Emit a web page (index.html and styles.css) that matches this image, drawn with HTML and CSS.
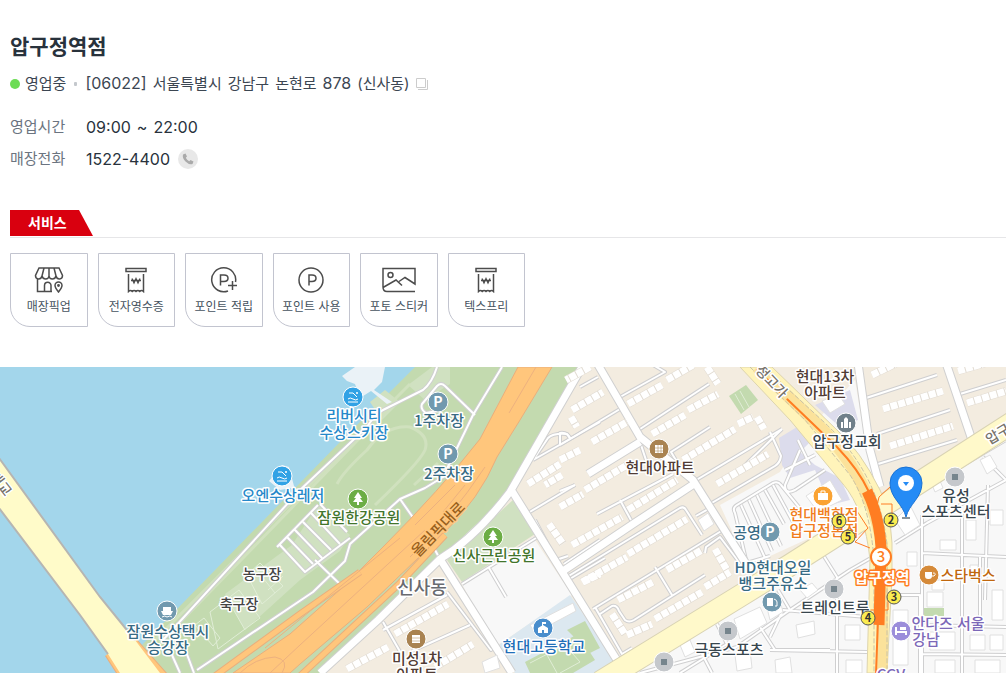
FILE: index.html
```html
<!DOCTYPE html>
<html lang="ko">
<head>
<meta charset="utf-8">
<meta name="viewport" content="width=device-width, initial-scale=1">
<title>압구정역점</title>
<link rel="stylesheet" href="styles.css">
</head>
<body>
<main class="store">
  <header class="summary">
    <h1 class="name">압구정역점</h1>
    <div class="status-row">
      <span class="status"><i class="dot"></i>영업중</span>
      <span class="sep"></span>
      <span class="address"><span class="num">[06022]</span> <span>서울특별시</span> <span>강남구</span> <span>논현로</span> <span class="num">878</span> <span>(신사동)</span></span>
      <button class="copy" type="button" aria-label="주소 복사">
        <svg width="14" height="14" viewBox="0 0 14 14"><path class="copy-line" d="M1.5 1.5h9v9h-9zM12.500 3v9.500H3"/></svg>
      </button>
    </div>
    <dl class="facts">
      <dt>영업시간</dt><dd class="hours"><span>09:00</span> <span>~</span> <span>22:00</span></dd>
      <dt>매장전화</dt><dd>1522-4400
        <a class="call" href="tel:1522-4400" aria-label="전화 걸기"><svg width="12" height="12" viewBox="0 0 12 12"><path d="M1 1.500 3.500.5 5 3.500 3.800 4.800Q4.800 7 7.200 8.200L8.500 7l3 1.500-1 2.500Q7 12 3.500 8.500 0 5 1 1.500z"/></svg></a>
      </dd>
    </dl>
  </header>

  <section class="services">
    <div class="tab-line"><h2 class="tab">서비스</h2></div>
    <ul class="cards">
      <li class="card">
        <svg class="icon" width="30" height="26" viewBox="0 0 30 26"><path d="M5 1h20l3.500 7.500c0 4.500-5.500 4.500-6.500.5-1 4-6.500 4-7 0-.5 4-6 4-7 0-1 4-6.500 4-6.500-.5zM10 1 8 9M15 1v8M20 1l2 8M3.500 12v12.500H18M10.500 24v-5.500a3 3 0 0 1 6.500 0V24M24.500 25c-2-2.500-3.500-4.500-3.500-6.500a3.500 3.500 0 0 1 7 0c0 2-1.500 4-3.500 6.500z"/><circle cx="24.500" cy="18.500" r=".7"/></svg>
        <span>매장픽업</span></li>
      <li class="card">
        <svg class="icon" width="22" height="26" viewBox="0 0 22 26"><path d="M1 1.500h20v3H1zM3.500 7v17.500q2-2 3.750 0 1.900-2 3.750 0 1.900-2 3.750 0 1.900-2 3.750 0V7"/><path class="won" d="m7 11.500 2 4.500 2-4.500 2 4.500 2-4.500M6 13.500h10"/></svg>
        <span>전자영수증</span></li>
      <li class="card">
        <svg class="icon" width="28" height="26" viewBox="0 0 28 26"><path d="M25.500 15A12 12 0 1 0 18 24M10.500 18.500V8H14q4 0 4 3.200t-4 3.300h-3.500M22.500 14v9M18 18.500h9"/></svg>
        <span>포인트 적립</span></li>
      <li class="card">
        <svg class="icon" width="26" height="26" viewBox="0 0 26 26"><circle cx="13" cy="13" r="12"/><path d="M11 18.500V8h3q4 0 4 3.200t-4 3.300h-3"/></svg>
        <span>포인트 사용</span></li>
      <li class="card">
        <svg class="icon" width="34" height="26" viewBox="0 0 34 26"><path d="M33 24.500H5Q1 24.500 1 20V1.500h32V17L23 10.500l-6 4M1 20.500 14 13l6 5.500"/><circle cx="8.500" cy="8" r="2.500"/></svg>
        <span>포토 스티커</span></li>
      <li class="card">
        <svg class="icon" width="22" height="26" viewBox="0 0 22 26"><path d="M1 1.500h20v3H1zM3.500 7v17.500q2-2 3.750 0 1.900-2 3.750 0 1.900-2 3.750 0 1.900-2 3.750 0V7"/><path class="won" d="m7 11.500 2 4.500 2-4.500 2 4.500 2-4.500M6 13.500h10"/></svg>
        <span>텍스프리</span></li>
    </ul>
  </section>

  <section class="map" aria-label="지도">
    <svg class="map-art" viewBox="0 367 1006 306" preserveAspectRatio="xMidYMid slice">
      <defs>
        <g id="lanes">
          <path d="M163 640 300 490 367 427Q375 414 383 410L423 390Q432 383 437 367M197 670 313 592 345 561 350 544 400 499 425 488 443 477 473 415 502 367M475 415 445 386Q441 382 437 386L422 404Q420 409 426 413L437 411M180 673 172 655M194 673 185 649M315 560 345 589M400 499 414 519M435 550 440 559"/>
          <path d="M277 547 318 505M279 544 305 572 350 538M287 537 313 564M295 530 322 558M303 522 331 550M311 513 340 544M320 504 347 532"/>
          <path d="M580 387 598 377M560 445 560 433Q568 432 570 439M560 445 620 409M620 397 665 372 648 362M640 429 709 384M680 467 671 452 710 427M560 491 575 485M597 514 673 474M620 500 632 522M693 482 782 429M770 432 781 456Q780 463 775 466L710 504M567 577 680 508Q684 506 686 510L702 535M593 609 723 530M655 567 672 595M600 614 612 606Q617 605 619 611L625 620Q629 623 634 620L705 575M595 607 622 654 632 648M705 553 706 547 720 537 745 570M696 516 712 507M640 442 646 460"/>
          <path d="M533 460 548 438Q553 433 567 434L571 439M535 520 556 560 568 556M564 564 600 540M568 580 605 558M533 460 600 422M528 513 575 485M489 568 506 597M462 584 536 538M447 592 491 650 495 647M383 630 447 595M383 622 402 655M412 651 470 625"/>
          <path d="M863 399 937 375M877 434 950 410M878 464 957 440M960 394 1006 380M740 470 782 429"/>
          <path d="M960 467 1006 440M983 457 1006 480M922 515V673M895 543 927 523 1006 480M922 553 1006 557M962 510V673M988 485 985 600M892 595H920V673M922 625 1006 627M922 654 1006 655M980 557V625M820 550 837 577V673M770 637 783 610 867 617M770 650 867 652M737 647 790 610 850 570 890 547M717 624 727 644M640 673 737 647M680 673 727 644M760 627 775 650H830M790 610 778 590M700 650 712 673"/>
          <path d="M747 564 735 513Q732 508 737 505L773 483Q778 481 781 485L803 512M741 505 765 558M749 500 772 551M757 495 781 546M765 490 784 524M773 485 793 522M750 562 770 556M800 450 785 485Q785 495 795 490L825 470M798 440 810 465M785 470 815 455"/>
        </g>
        <g id="streets">
          <path d="M582 367 510 492Q475 538 440 559L378 620 320 673M440 559 512 673M512 491 620 665M597 363 640 437 693 480 727 534 750 570M563 571 633 524 697 482M588 474 640 442M858 363 870 450 880 487M946 363 972 440"/>
        </g>
        <g id="blocks">
          <path d="M572 410 603 392M571 417 577 427M592 442 627 422M628 404 662 385M667 380 693 365M707 367 718 384M652 434 685 415M688 410 718 394M683 460 735 429M738 424 753 417M757 417 764 429M717 484 768 454M585 490 632 462M628 510 677 480M572 545 622 517M628 554 687 519M582 582 627 557M667 570 702 550M715 549 727 570M705 587 730 572M618 600 653 582M655 619 702 592M612 614 625 634M627 635 652 624M560 460 580 450M560 507 583 494M528 484 560 464M549 524 563 544M395 634 448 604M347 669 388 647M435 667 473 644M583 582 600 574M872 375 905 359M883 409 943 391M890 446 953 426M967 403 1006 391M958 371 1006 357M590 367 566 380M562 475 545 485"/>
        </g>
      </defs>

      <rect class="land" x="0" y="367" width="1006" height="306"/>
      <path class="estate" d="M578 367H1006V425L790 560 740 590 607 673H320L440 560 510 492z"/>
      <path class="land" d="M533 537 572 595 495 647 462 584zM720 505 780 472 800 440 840 430 872 470 860 515 748 566zM822 415 855 380 865 440 880 487 865 465z"/>
      <path class="mall" d="M779 438 797 427 812 440 800 452 815 465 840 478 850 500 830 505 815 470 790 478 782 465zM815 405 850 390 858 420 840 427z"/>
      <path class="campus" d="M570 595 618 665 605 673H515L496 647z"/>
      <path class="water" d="M0 367H430L142 650 160 673H0z"/>
      <path class="park" d="M415 367H580L510 492 440 559 323 673H160L142 645 340 442z"/>
      <path class="park" d="M729 396 746 385 758 400 741 414z"/>
      <path class="lawn" d="M432 367H450V384L425 400 408 385zM370 402 385 390 400 402 382 420zM225 594 292 545 318 505 350 535 340 551 300 580 245 630z"/>
      <path class="grass-line" d="M150 645 410 384M160 643 390 407M337 484Q343 472 367 450 385 425 410 427 430 435 425 450 420 462 375 505M414 485 438 463"/>
      <path class="pitch" d="M195 625 213 646 220 638 204 618zM210 612 239 590 260 618 218 649zM247 575 260 563 283 586 262 604zM255 568 275 593M268 590 283 576M735 394 744 410M740 391 749 407M228 600 245 630"/>
      <path class="lawn" d="M513 500 535 534 462 582 447 560z"/>
      <path class="park" d="M525 662 578 634 595 660 573 673H530zM567 630 585 621 600 648 590 653zM920 608H944V616H920z"/>
      <path class="pitch" d="M530 663 565 645 580 662 560 673M547 655 557 673"/>
      <path class="dock" d="M342 376 355 367H385L382 382 374 390 392 402 387 404 371 391 360 398 355 384 347 381zM269 481 282 465 289 467 294 486 300 493 296 496 291 488 280 490z"/>

      <use class="lane-edge" href="#lanes"/><use class="lane-top" href="#lanes"/>
      <use class="street-edge" href="#streets"/><use class="street-top" href="#streets"/>
      <use class="block-edge" href="#blocks"/><use class="block-top" href="#blocks"/>

      <path class="building" d="M530 625 573 603 576 611 535 633zM482 662 497 655 500 668 485 673zM698 520 708 513 714 524 704 531zM734 619 760 607 767 623 740 639zM765 600 778 593 783 612 770 620zM735 655 750 650 752 668 737 671zM775 660 790 657 792 673H776zM796 625 814 621 815 634 798 638zM845 625H860V640H845zM846 660H862V673H846zM800 590 812 583 818 590 807 598zM893 610H908V665H893zM927 592H943V607H927zM932 580H944V590H932zM940 540H956V550H940zM970 565H978V580H970zM992 590H1003V620H992zM970 635H985V650H970zM990 635H1003V650H990zM930 632H955V650H930zM935 660H955V673H935zM975 660H1000V673H975zM895 520 910 505 920 525 905 535zM907 552H917V566H907zM966 520H976V540H966zM990 510H1003V525H990zM980 460 990 455 997 467 987 474zM930 480 938 476 943 488 935 492zM806 496 830 480 842 500 818 512zM822 401 838 394 845 404 830 413zM680 645 690 640 695 652 685 657z"/>

      <path class="freeway" d="M518 367 480 439Q440 490 383 547L343 587 290 634 233 673H290L300 664 367 607 443 534Q480 498 497 457L520 420 552 367z"/>
      <path class="ramp-edge" d="M215 676 300 614 360 572M300 676 400 583 445 535M133 640 165 676M108 654 122 676"/>
      <path class="ramp-top" d="M215 676 300 614 360 572M300 676 400 583 445 535M133 640 165 676M108 654 122 676"/>
      <path class="freeway-line" d="M536 367 509 413M465 485 443 512M425 530 300 645 270 673M400 538 320 603 265 648M240 673Q255 658 275 657 290 660 282 673M455 485 415 525M485 467Q450 520 410 557"/>
      <path class="bridge" d="M0 459 100 597 135 640 160 673H120L108 654 80 615 0 509z"/>
      <path class="bridge-line" d="M-1 458 100 597 135 640M-1 508 80 615 108 654"/>

      <path class="avenue-edge" d="M1015 421 900 495 790 565 740 596 600 682"/>
      <path class="boulevard" d="M740 367 790 420 843 484Q865 510 870 560L867 673H887L892 577V543Q890 510 880 490 860 450 837 430L772 367z"/>
      <path class="avenue-top" d="M1015 421 900 495 790 565 740 596 600 682"/>
      <path class="boulevard-core" d="M757 367 815 422Q870 475 882 545V673"/>
      <path class="boulevard-line" d="M750 367 805 420 850 475Q870 505 874 560V673M764 367 825 423Q880 475 887 545V673"/>
      <path class="exit" d="M868 528 857 511 842 514M868 528 855 542 870 548M876 510 879 497 890 487M881 504H892V518M870 610H888V600"/>
      <path class="metro-dash" d="M757 369 787 399"/>
      <path class="metro" d="M787 399 837 447Q859 470 869 492M878 620 876 673"/>
      <path class="metro-wide" d="M867 491Q879 515 881 547L879 625"/>

      <g class="road-name">
        <text transform="translate(442 533) rotate(-46)" class="road-brown">올림픽대로</text>
        <text transform="translate(768 385) rotate(46)">정고가</text>
        <text transform="translate(1006 435) rotate(-31)">압구정</text>
        <text transform="translate(-3 487) rotate(52)">대교</text>
      </g>

      <g class="pins">
        <g class="sky"><circle cx="353" cy="397" r="10"/><circle cx="282" cy="476" r="10"/></g>
        <g class="steel"><circle cx="438" cy="402" r="10"/><circle cx="448" cy="454" r="10"/><circle cx="770" cy="532" r="10"/><circle cx="167" cy="611" r="10"/><circle cx="772" cy="602" r="10"/></g>
        <g class="tree"><circle cx="358" cy="499" r="10"/><circle cx="493" cy="537" r="10"/></g>
        <g class="brown"><circle cx="659" cy="449" r="10"/><circle cx="416" cy="639" r="10"/></g>
        <circle class="blue" cx="543" cy="628" r="10"/>
        <circle class="slate" cx="846" cy="423" r="10"/>
        <circle class="amber" cx="823" cy="496" r="10"/>
        <circle class="coffee" cx="929" cy="575" r="10"/>
        <circle class="violet" cx="901" cy="631" r="10"/>
        <g class="gray"><circle cx="955" cy="477" r="10"/><circle cx="834" cy="589" r="10"/><circle cx="728" cy="631" r="10"/><circle cx="664" cy="662" r="10"/></g>
      </g>
      <path class="square" d="M952 474h6v6h-6zM831 586h6v6h-6zM725 628h6v6h-6zM661 659h6v6h-6z"/>
      <g class="glyph-line">
        <path d="M349 393 353 393 357 397M348 399q2-2 5 0t5 0M348 402h10M278 472h4l4 4M277 478q2-2 5 0t5 0M277 481h10"/>
        <path d="M821 493v-2h4v2M933 573q4 0 1 3h-2M162 617q3-2 5 0 3-2 5 0M774 599q3 1 3 3v4h-2"/>
      </g>
      <g class="glyph">
        <path d="m358 492 4 6h-2l3 4h-4v3h-2v-3h-4l3-4h-2zM493 530l4 6h-2l3 4h-4v3h-2v-3h-4l3-4h-2z"/>
        <path d="M655 445h8v8h-8zM412 635h8v8h-8z"/>
        <path d="M538 633v-5l5-3 5 3v5h-4v-3h-2v3zM542 622h4v2h-3v2h-1zM841 428v-6h2v6zM844 428v-9l2-2 2 2v9zM849 428v-6h2v6zM818 493h10v7h-10zM925 572h7v4q0 3-3 3h-1q-3 0-3-3zM895 627h2v4h10v4h-2v-2h-8v2h-2zM900 627h6v3h-6zM163 607h8v4h2l-2 4h-8l-2-4h2zM767 598h6v8h-6z"/>
        <circle cx="357" cy="393" r="1"/><circle cx="286" cy="472" r="1"/>
      </g>
      <path class="calendar-line" d="M655 448h8M655 451h8M658 445v8M661 445v8M412 638h8M412 641h8"/>
      <g class="parking"><text x="438" y="407">P</text><text x="448" y="459">P</text><text x="770" y="537">P</text></g>

      <g class="label">
        <g class="t-sky"><text x="354" y="421">리버시티</text><text x="354" y="438">수상스키장</text><text x="283" y="501">오엔수상레저</text></g>
        <g class="t-steel"><text x="439" y="426">1주차장</text><text x="449" y="479">2주차장</text><text x="168" y="637">잠원수상택시</text><text x="168" y="653">승강장</text><text x="747" y="538">공영</text><text x="773" y="573">HD현대오일</text><text x="773" y="589">뱅크주유소</text></g>
        <g class="t-tree"><text x="359" y="523">잠원한강공원</text><text x="494" y="561">신사근린공원</text></g>
        <g class="t-dark small"><text x="262" y="579">농구장</text><text x="239" y="609">축구장</text></g>
        <text class="t-town" x="422" y="594">신사동</text>
        <text class="t-blue" x="544" y="652">현대고등학교</text>
        <g class="t-brown"><text x="417" y="664">미성1차</text><text x="417" y="680">아파트</text><text x="660" y="473">현대아파트</text><text x="825" y="382">현대13차</text><text x="825" y="398">아파트</text></g>
        <g class="t-slate"><text x="847" y="447">압구정교회</text><text x="956" y="501">유성</text><text x="956" y="517">스포츠센터</text><text x="835" y="613">트레인트루</text><text x="729" y="655">극동스포츠</text></g>
        <g class="t-amber"><text x="824" y="520">현대백화점</text><text x="824" y="536">압구정본점</text></g>
        <text class="t-coffee" x="968" y="581">스타벅스</text>
        <g class="t-violet"><text x="948" y="629">안다즈 서울</text><text x="926" y="645">강남</text><text x="891" y="680">CGV</text></g>
        <text class="t-station" x="882" y="583">압구정역</text>
      </g>

      <g class="exit-no">
        <circle cx="891" cy="520" r="7"/><circle cx="894" cy="597" r="7"/><circle cx="868" cy="618" r="7"/><circle cx="848" cy="537" r="7"/><circle cx="839" cy="521" r="7"/>
        <text x="891" y="524">2</text><text x="894" y="601">3</text><text x="868" y="622">4</text><text x="848" y="541">5</text><text x="839" y="525">6</text>
      </g>
      <circle class="line-badge" cx="881" cy="557" r="10"/><text class="line-no" x="881" y="562">3</text>
      <path class="marker-shade" d="M902 517h8v2h-8z"/>
      <path class="marker" d="M906 517C903 504 890 498 890 483a16 16 0 0 1 32 0c0 15-13 21-16 34z"/>
      <circle class="marker-hole" cx="906" cy="483" r="8"/><path class="marker-tip" d="M903 482h6l-3 4z"/>
    </svg>
  </section>
</main>
</body>
</html>
```
FILE: styles.css
```css
* { box-sizing: border-box; }
body {
  margin: 0;
  background: #fff;
  color: #28323c;
  font-family: Inter, "Noto Sans CJK KR", sans-serif;
}
h1, h2, ul, dl, dd { margin: 0; padding: 0; }

.summary { padding: 32px 10px 0; }
.name { font-size: 21px; line-height: 30px; font-weight: 700; }
.status-row {
  display: flex;
  align-items: center;
  margin-top: 9px;
  font-size: 15px;
  line-height: 24px;
  color: #3c4652;
}
.status { display: flex; align-items: center; gap: 5px; }
.dot { width: 10px; height: 10px; border-radius: 50%; background: #6cdc55; }
.sep { width: 3px; height: 4px; margin: 0 8px; border-radius: 1px; background: #c4c8cd; }
.address { display: flex; flex-wrap: wrap; align-items: baseline; column-gap: 6px; }
.num { font-size: 16px; }
.copy {
  display: flex;
  margin-left: 5px;
  padding: 0;
  border: 0;
  background: none;
}
.copy-line { fill: none; stroke: #ccc; }
.facts {
  display: grid;
  grid-template-columns: 76px 1fr;
  row-gap: 8px;
  margin-top: 19px;
  line-height: 24px;
}
.facts dt { font-size: 15px; color: #6b7480; }
.facts dd { display: flex; align-items: center; gap: 8px; font-size: 16px; }
.facts .hours { gap: 6px; }
.call {
  display: grid;
  place-items: center;
  width: 20px;
  height: 20px;
  border-radius: 50%;
  background: #e8e8e8;
  fill: #aaa;
}

.services { padding: 39px 0 40px 10px; }
.tab-line { border-bottom: 1px solid #e6e6e8; padding-bottom: 1px; }
.tab {
  width: 83px;
  padding-left: 18px;
  background: #d9000f;
  clip-path: polygon(0 0, 69px 0, 100% 100%, 0 100%);
  color: #fff;
  font-size: 14px;
  line-height: 26px;
  font-weight: 700;
}
.cards {
  display: grid;
  grid-template-columns: repeat(6, 1fr);
  gap: 10px;
  max-width: 515px;
  margin-top: 15px;
  list-style: none;
}
.card {
  display: flex;
  flex-direction: column;
  align-items: center;
  gap: 5px;
  padding: 13px 0 11px;
  border: 1px solid #c2c4cf;
  border-bottom-left-radius: 20px;
  color: #465360;
  font-size: 12px;
  line-height: 17px;
  white-space: nowrap;
}
.icon { fill: none; stroke: #4c4c4c; stroke-width: 1.5; }
.won { stroke-width: 1.3; }

.map { height: 306px; overflow: hidden; }
.map-art { display: block; width: 100%; height: 100%; font-family: "Noto Sans CJK KR", sans-serif; }
.map-art path { fill: none; }
.map-art .land { fill: #f8f8f8; }
.map-art .estate { fill: #f3ece0; }
.map-art .mall { fill: #dcdcec; }
.map-art .campus { fill: #dce8f0; }
.map-art .water { fill: #a3d6eb; }
.map-art .park { fill: #c3daaf; }
.map-art .lawn { fill: #d0e1c1; }
.map-art .dock { fill: #eaf2f7; }
.grass-line { stroke: #d0e1be; stroke-width: 3; }
.pitch { stroke: #e0edd6; stroke-width: 1; }
.lane-edge, .street-edge, .block-edge, .lane-top, .street-top, .block-top { fill: none; stroke-linejoin: round; }
.lane-edge { stroke: #cfcfd0; stroke-width: 4; }
.lane-top { stroke: #fff; stroke-width: 2; }
.street-edge { stroke: #d0d0d0; stroke-width: 9; }
.street-top { stroke: #fff; stroke-width: 7; }
.block-edge { stroke: #e2dcd3; stroke-width: 8; }
.block-top { stroke: #fff; stroke-width: 7; stroke-dasharray: 7 1; }
.map-art .building { fill: #fff; stroke: #e0e0e0; }
.map-art .freeway { fill: #ffc67c; stroke: #eaae7c; }
.ramp-edge { stroke: #eaae7c; stroke-width: 7; }
.ramp-top { stroke: #ffc67c; stroke-width: 5; }
.freeway-line { stroke: #edb17f; }
.map-art .bridge { fill: #fffbc9; }
.bridge-line { stroke: #b6b5b2; stroke-width: 2; }
.avenue-edge { stroke: #d9d3b4; stroke-width: 23; }
.avenue-top { stroke: #fff9ca; stroke-width: 21; }
.map-art .boulevard { fill: #fff4ba; stroke: #ddd4ad; }
.boulevard-core { stroke: #fbe29b; stroke-width: 12; }
.boulevard-line { stroke: #c9c2a6; stroke-width: 1; stroke-dasharray: 5 2; }
.exit { stroke: #ff7d22; stroke-width: 1; }
.metro { stroke: #ff7d22; stroke-width: 2; }
.metro-dash { stroke: #ff7d22; stroke-width: 2; stroke-dasharray: 5 9; }
.metro-wide { stroke: #ff7d22; stroke-width: 11; }

.road-name text, .label text { text-anchor: middle; paint-order: stroke; stroke: #fff; stroke-width: 3; stroke-linejoin: round; font-weight: 500; }
.road-name { font-size: 14px; fill: #77736b; }
.road-name .road-brown { fill: #98601c; stroke: #ffc67c; font-size: 15px; }
.label { font-size: 15px; }
.small { font-size: 14px; }
.t-sky { fill: #2688c9; }
.t-steel { fill: #386b84; }
.t-tree { fill: #42752c; }
.t-dark { fill: #444; }
.label .t-town { fill: #696b70; font-size: 18px; }
.t-blue { fill: #216eb8; }
.t-brown { fill: #513c35; }
.t-slate { fill: #38464e; }
.t-amber { fill: #f17e20; }
.t-coffee { fill: #c0670e; }
.t-violet { fill: #7c68b8; }
.label .t-station { fill: #fff; stroke: #ff7d22; font-weight: 700; }

.pins { stroke: #fff; stroke-width: 1; }
.sky { fill: #31a2e5; }
.steel { fill: #7199ae; }
.tree { fill: #6cad45; }
.brown { fill: #a98351; }
.blue { fill: #488dcc; }
.slate { fill: #70808a; }
.amber { fill: #faa333; }
.coffee { fill: #d58a39; }
.violet { fill: #9b8dda; }
.gray { fill: #c5c8cc; }
.map-art .square { fill: #76858d; }
.map-art .glyph path, .glyph { fill: #fff; }
.glyph-line { stroke: #fff; stroke-width: 1; }
.calendar-line { stroke: #a98351; stroke-width: 1; opacity: .5; }
.parking { fill: #fff; font-size: 14px; font-weight: 700; text-anchor: middle; }
.exit-no { fill: #fbec50; stroke: #555; font-size: 11px; font-weight: 700; text-anchor: middle; }
.exit-no text { fill: #333; stroke: none; }
.line-badge { fill: #fff; stroke: #ff7d22; stroke-width: 2; }
.line-no { fill: #ff7d22; font-size: 15px; font-weight: 500; text-anchor: middle; }
.map-art .marker { fill: #258bf5; stroke: #1a72d4; }
.map-art .marker-shade { fill: #8b959c; }
.marker-hole { fill: #fff; }
.map-art .marker-tip { fill: #258bf5; }
```
